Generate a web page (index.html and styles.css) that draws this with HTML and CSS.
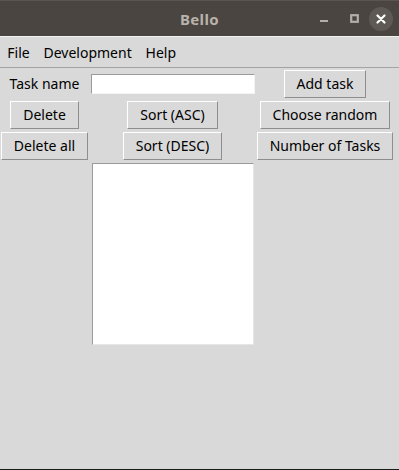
FILE: index.html
```html
<!DOCTYPE html>
<html>
<head>
<meta charset="utf-8">
<title>Bello</title>
<link rel="stylesheet" href="styles.css">
</head>
<body>
<div class="window">
  <header class="titlebar">
    <div class="title-spacer"></div>
    <div class="title">Bello</div>
    <div class="controls">
      <span class="ctl ctl-min"><svg width="10" height="10" viewBox="0 0 10 10"><rect x="1" y="6" width="8" height="2" fill="#b3aea8"/></svg></span>
      <span class="ctl ctl-max"><svg width="10" height="10" viewBox="0 0 10 10"><rect x="2" y="2" width="6" height="6" fill="none" stroke="#b3aea8" stroke-width="2"/></svg></span>
      <span class="ctl ctl-close"><svg width="10" height="10" viewBox="0 0 10 10"><path d="M1.5 1.5 L8.5 8.5 M8.5 1.5 L1.5 8.5" stroke="#ffffff" stroke-width="2.2" stroke-linecap="round"/></svg></span>
    </div>
  </header>
  <nav class="menubar">
    <span class="menu-item">File</span>
    <span class="menu-item">Development</span>
    <span class="menu-item">Help</span>
  </nav>
  <main class="grid">
    <div class="cell"><span class="label">Task name</span></div>
    <div class="cell"><input class="entry" type="text"></div>
    <div class="cell"><button class="btn">Add task</button></div>

    <div class="cell"><button class="btn">Delete</button></div>
    <div class="cell"><button class="btn">Sort (ASC)</button></div>
    <div class="cell"><button class="btn">Choose random</button></div>

    <div class="cell"><button class="btn">Delete all</button></div>
    <div class="cell"><button class="btn">Sort (DESC)</button></div>
    <div class="cell"><button class="btn">Number of Tasks</button></div>

    <div class="cell"></div>
    <div class="cell cell-list"><div class="listbox"></div></div>
    <div class="cell"></div>
  </main>
</div>
</body>
</html>
```

FILE: styles.css
```css
* { box-sizing: border-box; }

html, body {
  margin: 0;
  padding: 0;
  background: #d9d9d9;
}

body {
  font-family: "Noto Sans", "DejaVu Sans", sans-serif;
  font-size: 14px;
  color: #000;
}

.window {
  width: 399px;
  height: 470px;
  display: flex;
  flex-direction: column;
  background: #d9d9d9;
  border-bottom: 1px solid #1a1a1a;
  overflow: hidden;
}

.titlebar {
  height: 36px;
  flex: none;
  display: grid;
  grid-template-columns: 1fr auto 1fr;
  align-items: center;
  background: #4a4540;
  border-top: 1px solid #5a554f;
}

.title {
  font-weight: bold;
  font-size: 15px;
  color: #b9b3ac;
  letter-spacing: 0.4px;
}

.controls {
  display: flex;
  justify-content: flex-end;
  align-items: center;
  padding-right: 6px;
}

.ctl {
  width: 30px;
  height: 24px;
  display: flex;
  align-items: center;
  justify-content: center;
}

.ctl-min {
  margin-right: 0;
}

.ctl-max svg {
  width: 11px;
  height: 11px;
}

.ctl-close {
  width: 24px;
  border-radius: 50%;
  background: #5e5954;
}

.menubar {
  height: 32px;
  flex: none;
  display: flex;
  align-items: center;
  border-top: 1px solid #f2f2f2;
  border-bottom: 1px solid #a3a3a3;
}

.menu-item {
  padding: 0 6.5px 0 7.3px;
}

.grid {
  display: grid;
  grid-template-columns: 89px 167px 138px;
  grid-template-rows: 31px 31px 31px auto;
  margin-top: 1px;
}

.cell {
  display: flex;
  justify-content: center;
  align-items: flex-start;
}

.label {
  margin-top: 5px;
  line-height: 20px;
}

.entry {
  margin-top: 5px;
  width: 164px;
  height: 20px;
  background: #fff;
  border: 1px solid;
  border-color: #9a9a9a #f4f4f4 #f4f4f4 #9a9a9a;
  font: inherit;
  padding: 0 2px;
  outline: none;
}

.btn {
  margin-top: 1px;
  height: 28px;
  padding: 0 12px;
  font: inherit;
  color: #000;
  background: #d9d9d9;
  border: 1px solid;
  border-color: #ffffff #8e8e8e #8e8e8e #ffffff;
  border-radius: 0;
  line-height: 26px;
  white-space: nowrap;
}

.listbox {
  margin-top: 1px;
  width: 162px;
  height: 182px;
  background: #fff;
  border: 1px solid;
  border-color: #9a9a9a #e6e6e6 #e6e6e6 #9a9a9a;
}
```
